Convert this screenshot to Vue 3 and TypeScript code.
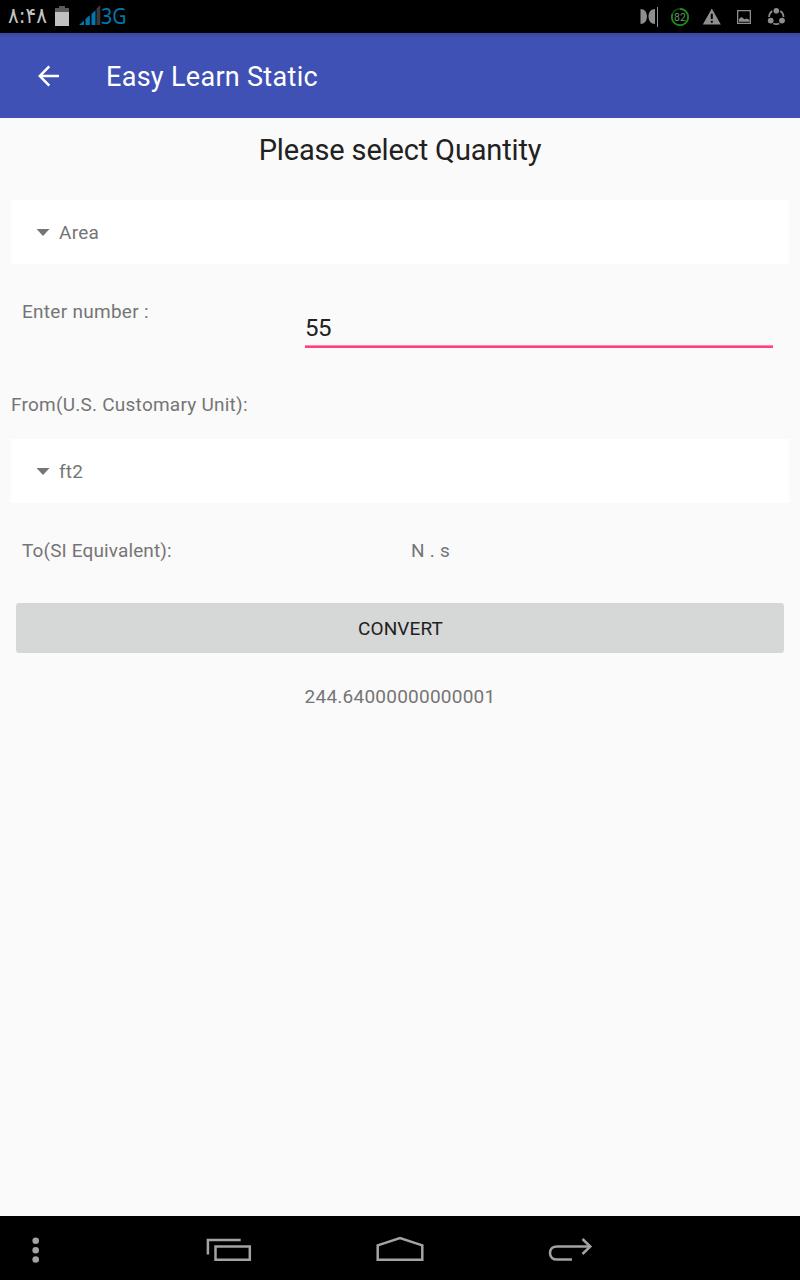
<script setup lang="ts">
import { ref } from 'vue'

const quantity = ref<string>('Area')
const amount = ref<string>('55')
const unit = ref<string>('ft2')
const target = ref<string>('N . s')
const result = ref<string>('244.64000000000001')
</script>

<template>
  <div class="screen">
    <header class="status">
      <span class="clock">۸:۴۸</span>
      <svg class="battery" width="14" height="20" viewBox="0 0 14 20">
        <path d="M4 0h6v2h4v4H0V2h4z" fill="#5b5b5b" />
        <path d="M0 6h14v14H0z" fill="#c0c0c0" />
      </svg>
      <svg class="signal" width="22" height="20" viewBox="0 0 22 20">
        <path d="M0 20l5-4.500V20zM6.500 20v-6l4.300-3.700V20zM12.500 20V9l4-3.700V20z" fill="#0077ad" />
        <path d="M17.500 20V3.500L21.300 0v20z" fill="#3a3a3a" />
      </svg>
      <span class="network">3G</span>
      <div class="notices">
        <svg width="160" height="33" viewBox="640 0 160 33">
          <g fill="#8e8e8e">
            <path d="M640.500 9c4 0 6.500 3 6.500 7.500s-2.500 7.500-6.500 7.500zM655 9c-4 0-6.500 3-6.500 7.500s2.500 7.500 6.500 7.500z" />
            <path d="M657 7h1v20h-1z" />
            <path fill-rule="evenodd" d="M711.800 8.500l9 16h-18zM710.800 13.800v5.200h2v-5.200zM710.800 20.800v2h2v-2z" />
            <path fill-rule="evenodd" d="M737 10h14v14h-14zM738.300 11.300v11.400h11.400V11.300z" />
            <path d="M739 21.800v-2.800l2.500-2 3 2.300 2.500-.8 2.500 1.500v1.800z" />
            <circle cx="776.300" cy="10.800" r="2.800" />
            <circle cx="770.700" cy="20.600" r="2.900" />
            <circle cx="782" cy="20.600" r="2.900" />
          </g>
          <g fill="none" stroke="#8e8e8e" stroke-width="1.600">
            <path d="M772.300 11a7.300 7.300 0 0 0-3.300 6" />
            <path d="M780.300 11a7.300 7.300 0 0 1 3.300 6" />
            <path d="M773.300 23.500a7.300 7.300 0 0 0 6 0" />
          </g>
          <circle cx="680" cy="17" r="8.200" fill="none" stroke="#124d12" stroke-width="1.600" />
          <path d="M680 8.800a8.200 8.200 0 1 1-7.600 5" fill="none" stroke="#1f8a1f" stroke-width="1.700" />
          <text class="level" x="680" y="20.700" text-anchor="middle" fill="#5f9a60">82</text>
        </svg>
      </div>
    </header>

    <nav class="appbar">
      <svg class="back" width="22" height="22" viewBox="0 0 22 22">
        <path d="M11.300 1.300L1.800 11l9.500 9.700M1.800 11H21" fill="none" stroke="#fff" stroke-width="2.500" />
      </svg>
      <h1>Easy Learn Static</h1>
    </nav>

    <main class="content">
      <h2>Please select Quantity</h2>
      <div class="spinner">
        <i class="caret"></i><span>{{ quantity }}</span>
      </div>
      <div class="entry">
        <label class="enter">Enter number :</label>
        <div class="field">{{ amount }}</div>
      </div>
      <p class="from">From(U.S. Customary Unit):</p>
      <div class="spinner">
        <i class="caret"></i><span>{{ unit }}</span>
      </div>
      <div class="target">
        <span class="to">To(SI Equivalent):</span>
        <span class="si">{{ target }}</span>
      </div>
      <button class="convert" type="button">CONVERT</button>
      <p class="result">{{ result }}</p>
    </main>

    <footer class="navbar">
      <svg width="800" height="64" viewBox="0 1216 800 64">
        <g fill="#a3a3a3">
          <circle cx="35.700" cy="1240.800" r="3.300" />
          <circle cx="35.700" cy="1250.200" r="3.300" />
          <circle cx="35.700" cy="1259.500" r="3.300" />
        </g>
        <g fill="none" stroke="#a3a3a3" stroke-width="2.500">
          <path d="M207.900 1254.500V1240.100H240.700" />
          <path d="M215.500 1246.500h34.300v13.200h-34.300z" />
          <path d="M377.700 1259.700v-14.400L400 1238l22.300 7.300v14.400z" />
          <path d="M572 1259.600h-15c-4.300 0-7-2.700-7-6.600s2.700-6.600 7-6.600h33" />
          <path d="M582.500 1239l7.800 7.500-7.800 7.500" />
        </g>
      </svg>
    </footer>
  </div>
</template>

<style>
body {
  margin: 0;
}
</style>

<style scoped>
.screen {
  width: 800px;
  height: 1280px;
  display: flex;
  flex-direction: column;
  overflow: hidden;
  background: #fafafa;
  color: #757575;
  font-family: Roboto, "Noto Sans", sans-serif;
  font-size: 19px;
  letter-spacing: 0.24px;
  line-height: 22px;
}
h1,
h2,
p {
  margin: 0;
  font-weight: 400;
}
.status {
  height: 33px;
  flex: none;
  display: flex;
  background: #000;
  letter-spacing: 0;
}
.clock {
  width: 47px;
  padding-left: 8px;
  box-sizing: border-box;
  color: #c4c4c4;
  font: 20px/33px "DejaVu Sans", sans-serif;
  white-space: nowrap;
  transform: scaleY(1.1);
  transform-origin: 0 25px;
}
.battery {
  margin: 6px 0 0 8px;
}
.signal {
  margin: 5px 0 0 10px;
}
.network {
  color: #0077ad;
  font: 22.5px/31px "Noto Sans", sans-serif;
  transform: scaleX(0.87);
  transform-origin: 0 0;
}
.notices {
  margin-left: auto;
}
.level {
  font: 10.5px Roboto, sans-serif;
}
.appbar {
  height: 85px;
  flex: none;
  display: flex;
  align-items: center;
  background: linear-gradient(#37469d, #3f51b5 5px);
  color: #fff;
}
.back {
  margin: 0 0 0 38px;
}
h1 {
  margin-left: 46px;
  padding-top: 2px;
  font-size: 27px;
  letter-spacing: 0.3px;
  line-height: 32px;
}
.content {
  flex: 1;
  padding: 16px 11px 0;
}
h2 {
  height: 66px;
  text-align: center;
  color: #212121;
  font-size: 29px;
  letter-spacing: -0.16px;
  line-height: 33px;
}
.spinner {
  height: 64px;
  display: flex;
  align-items: center;
  background: #fff;
}
.spinner span {
  padding-top: 1px;
}
.caret {
  width: 13px;
  height: 7px;
  margin: 1px 9.5px 0 25.5px;
  background: #757575;
  clip-path: polygon(0 0, 100% 0, 50% 100%);
}
.entry {
  height: 130px;
  display: flex;
  padding: 36px 16px 0 11px;
  box-sizing: border-box;
}
.enter {
  padding-top: 1px;
  letter-spacing: 0.28px;
}
.field {
  margin: 15px 0 0 auto;
  width: 468px;
  height: 33px;
  background: linear-gradient(#ff80aa 1px, #ff4081 1px) bottom / 100% 3px no-repeat;
  color: #212121;
  font-size: 24px;
  letter-spacing: -0.5px;
  line-height: 27px;
}
.from {
  height: 45px;
}
.target {
  height: 100px;
  padding: 37px 11px 0;
  box-sizing: border-box;
  display: grid;
  grid-template-columns: 389px 1fr;
}
.to {
  letter-spacing: 0.13px;
}
.convert {
  display: block;
  width: 768px;
  height: 50px;
  margin: 0 auto;
  padding: 1px 0 0 1px;
  border: 0;
  border-radius: 3px;
  background: #d6d7d7;
  color: #212121;
  font: inherit;
  letter-spacing: 0.1px;
}
.result {
  margin-top: 33px;
  text-align: center;
}
.navbar {
  height: 64px;
  flex: none;
  background: #000;
}
.navbar svg {
  display: block;
}
</style>
